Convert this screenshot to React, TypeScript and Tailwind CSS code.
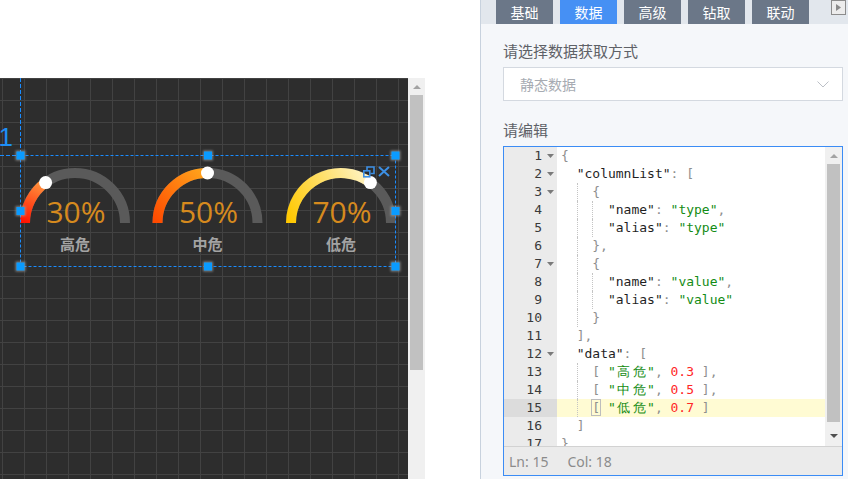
import React from 'react';

const tabs = ['基础', '数据', '高级', '钻取', '联动'];

type Kind = 'k' | 's' | 'n' | 'p';
type Line = { indent: number; fold?: boolean; toks: [Kind, string][]; box?: boolean };

const lines: Line[] = [
  { indent: 0, fold: true, toks: [['p', '{']] },
  { indent: 2, fold: true, toks: [['k', '"columnList"'], ['p', ': ['], ] },
  { indent: 4, fold: true, toks: [['p', '{']] },
  { indent: 6, toks: [['k', '"name"'], ['p', ': '], ['s', '"type"'], ['p', ',']] },
  { indent: 6, toks: [['k', '"alias"'], ['p', ': '], ['s', '"type"']] },
  { indent: 4, toks: [['p', '},']] },
  { indent: 4, fold: true, toks: [['p', '{']] },
  { indent: 6, toks: [['k', '"name"'], ['p', ': '], ['s', '"value"'], ['p', ',']] },
  { indent: 6, toks: [['k', '"alias"'], ['p', ': '], ['s', '"value"']] },
  { indent: 4, toks: [['p', '}']] },
  { indent: 2, toks: [['p', '],']] },
  { indent: 2, fold: true, toks: [['k', '"data"'], ['p', ': [']] },
  { indent: 4, toks: [['p', '[ '], ['s', '"高危"'], ['p', ', '], ['n', '0.3'], ['p', ' ],']] },
  { indent: 4, toks: [['p', '[ '], ['s', '"中危"'], ['p', ', '], ['n', '0.5'], ['p', ' ],']] },
  { indent: 4, box: true, toks: [['p', '[ '], ['s', '"低危"'], ['p', ', '], ['n', '0.7'], ['p', ' ]']] },
  { indent: 2, toks: [['p', ']']] },
  { indent: 0, toks: [['p', '}']] },
];

const kindClass: Record<Kind, string> = {
  k: 'text-[#1f1f1f]',
  s: 'text-[#148c14]',
  n: 'text-[#ff2626]',
  p: 'text-[#8e8e8e]',
};

// wide CJK glyphs take two columns in the editor
function renderText(text: string) {
  return Array.from(text).map((ch, i) =>
    /[\u4e00-\u9fff]/.test(ch) ? (
      <span key={i} className="inline-block w-[2ch] text-center">
        {ch}
      </span>
    ) : (
      ch
    )
  );
}

function CodeRow({ line, n }: { line: Line; n: number }) {
  const active = n === 15;
  const chunks = Array.from({ length: line.indent / 2 });
  return (
    <div className="flex h-[18px]">
      <div className={`flex w-[53px] shrink-0 ${active ? 'bg-[#dcdcdc]' : 'bg-[#ebebeb]'}`}>
        <span className="w-[38px] text-right text-[#3a3a3a]">{n}</span>
        <span className="flex w-[15px] items-center justify-center pl-[1px]">
          {line.fold && (
            <svg width="7" height="4" viewBox="0 0 7 4">
              <path d="M0 0H7L3.5 4Z" fill="#7a7a7a" />
            </svg>
          )}
        </span>
      </div>
      <div className={`min-w-0 flex-1 whitespace-pre pl-[4px] ${active ? 'bg-[#fffbd3]' : ''}`}>
        {chunks.map((_, i) => (
          <span
            key={i}
            className={`inline-block h-[18px] w-[2ch] align-top ${i > 0 ? 'border-l border-dotted border-[#c4c4c4]' : ''}`}
          />
        ))}
        {line.toks.map(([k, t], i) =>
          line.box && i === 0 ? (
            <span key={i} className={kindClass[k]}>
              <span className="outline outline-1 outline-[#bdbdbd]">[</span>
              {t.slice(1)}
            </span>
          ) : (
            <span key={i} className={kindClass[k]}>
              {renderText(t)}
            </span>
          )
        )}
      </div>
    </div>
  );
}

function Editor() {
  return (
    <div className="mt-[6px] flex h-[330px] flex-col border border-[#3b8cf5] bg-white">
      <div className="flex h-[299px] overflow-hidden">
        <div className="min-w-0 flex-1 overflow-hidden font-['DejaVu_Sans_Mono',monospace] text-[13px] leading-[18px]">
          {lines.map((l, i) => (
            <CodeRow key={i} line={l} n={i + 1} />
          ))}
        </div>
        <div className="flex w-[17px] shrink-0 flex-col items-center bg-[#f0f0f0]">
          <svg className="mt-[7px]" width="8" height="4" viewBox="0 0 8 4">
            <path d="M0 4L4 0L8 4Z" fill="#a3a3a3" />
          </svg>
          <div className="mt-[6px] h-[258px] w-[13px] bg-[#c1c1c1]" />
          <svg className="mt-[12px]" width="8" height="4" viewBox="0 0 8 4">
            <path d="M0 0H8L4 4Z" fill="#505050" />
          </svg>
        </div>
      </div>
      <div className="flex h-[29px] items-center border-t border-[#d2d2d2] bg-[#ebebeb] pl-[5px] font-['Noto_Sans',sans-serif] text-[14px] text-[#8b8b8b]">
        <span>Ln: 15</span>
        <span className="ml-[19px]">Col: 18</span>
      </div>
    </div>
  );
}

function SettingsPanel() {
  return (
    <div className="flex min-w-0 flex-1 flex-col bg-[#f5f7fa]">
      <div className="flex h-[24px] shrink-0 gap-[7px] bg-[#e2e7ed] pl-[15px]">
        {tabs.map((t) => (
          <div
            key={t}
            className={`flex w-[57px] items-center justify-center text-[14px] text-white ${
              t === '数据' ? 'bg-[#4690f4]' : 'bg-[#6b7788]'
            }`}
          >
            {t}
          </div>
        ))}
        <div className="ml-auto mr-[2px] flex h-[15px] w-[15px] items-center justify-center border border-[#8c8c8c] bg-[#ececec]">
          <svg width="5" height="7" viewBox="0 0 5 7">
            <path d="M0 0L5 3.5L0 7Z" fill="#8a8a8a" />
          </svg>
        </div>
      </div>
      <div className="flex flex-col pl-[22px] pr-[5px]">
        <div className="mt-[17px] text-[15px] leading-[20px] text-[#5e6167]">请选择数据获取方式</div>
        <div className="mt-[6px] flex h-[34px] items-center justify-between border border-[#d4d9e0] bg-white pl-[16px] pr-[13px]">
          <span className="text-[14px] text-[#a7abb2]">静态数据</span>
          <svg width="12" height="7" viewBox="0 0 12 7">
            <path d="M0.5 0.5L6 6L11.5 0.5" fill="none" stroke="#bcc0c7" strokeWidth="1" />
          </svg>
        </div>
        <div className="mt-[19px] text-[15px] leading-[20px] text-[#5e6167]">请编辑</div>
        <Editor />
      </div>
    </div>
  );
}

const gauges = [
  { cx: 75, p: 0.3, label: '高危', id: 'g1', from: '#ff1200', to: '#ff9a40' },
  { cx: 207.5, p: 0.5, label: '中危', id: 'g2', from: '#ff4a00', to: '#ffa51c' },
  { cx: 341, p: 0.7, label: '低危', id: 'g3', from: '#ffc800', to: '#fff3c2' },
];

const handles: [number, number][] = [
  [20.5, 77.5], [208, 77.5], [395.5, 77.5],
  [20.5, 133], [395.5, 133],
  [20.5, 188.5], [208, 188.5], [395.5, 188.5],
];

function GaugeWidget() {
  const cy = 145;
  const r = 50;
  return (
    <svg className="absolute left-0 top-0" width="408" height="401" viewBox="0 0 408 401">
      <defs>
        {gauges.map((g) => {
          const a = Math.PI * g.p;
          return (
            <linearGradient
              key={g.id}
              id={g.id}
              gradientUnits="userSpaceOnUse"
              x1={g.cx - r}
              y1={cy}
              x2={g.cx - r * Math.cos(a)}
              y2={cy - r * Math.sin(a)}
            >
              <stop offset="0" stopColor={g.from} />
              <stop offset="1" stopColor={g.to} />
            </linearGradient>
          );
        })}
        <filter id="glow" x="-1" y="-1" width="3" height="3">
          <feGaussianBlur stdDeviation="1.3" />
        </filter>
      </defs>

      {/* guide lines */}
      <line x1="20.5" y1="0" x2="20.5" y2="77" stroke="#1a8cff" strokeDasharray="4 2" />
      <line x1="0" y1="77.5" x2="20" y2="77.5" stroke="#1a8cff" strokeDasharray="4 2" />
      <text
        x="13"
        y="68"
        textAnchor="end"
        fontSize="26"
        fill="#1e8ff5"
        fontFamily="Liberation Sans, sans-serif"
      >
        71
      </text>

      {gauges.map((g) => {
        const a = Math.PI * g.p;
        const ex = g.cx - r * Math.cos(a);
        const ey = cy - r * Math.sin(a);
        return (
          <g key={g.id}>
            <path
              d={`M ${g.cx - r} ${cy} A ${r} ${r} 0 0 1 ${g.cx + r} ${cy}`}
              fill="none"
              stroke="#5a5a5a"
              strokeWidth="10"
            />
            <path
              d={`M ${g.cx - r} ${cy} A ${r} ${r} 0 0 1 ${ex} ${ey}`}
              fill="none"
              stroke={`url(#${g.id})`}
              strokeWidth="10"
            />
            <circle cx={ex} cy={ey} r="6.5" fill="#ffffff" />
            <text
              x={g.cx + 1}
              y={cy}
              textAnchor="middle"
              fontSize="30"
              fill="#d68a1e"
              fontFamily="Open Sans, sans-serif"
            >
              {Math.round(g.p * 100)}%
            </text>
            <text
              x={g.cx}
              y={172}
              textAnchor="middle"
              fontSize="15"
              fontWeight="bold"
              fill="#a3a3a3"
              fontFamily="Noto Sans CJK SC, sans-serif"
            >
              {g.label}
            </text>
          </g>
        );
      })}

      {/* selection box */}
      <rect x="20.5" y="77.5" width="375" height="111" fill="none" stroke="#1a8cff" strokeDasharray="3 2" />

      {/* copy / close icons */}
      <g stroke="#3c8fe4" strokeWidth="1.6" fill="none">
        <rect x="363.8" y="170.8" width="6" height="6" transform="translate(0 -78)" />
        <path d="M367 92V89H374V95.5H370.5" />
        <path d="M379 89L389 98M389 89L379 98" strokeWidth="2" />
      </g>

      {handles.map(([x, y], i) => (
        <g key={i}>
          <rect x={x - 5} y={y - 5} width="10" height="10" fill="#a0a0a0" opacity="0.7" filter="url(#glow)" />
          <rect x={x - 4} y={y - 4} width="8" height="8" fill="#0a9bff" />
        </g>
      ))}
    </svg>
  );
}

function DesignCanvas() {
  return (
    <div className="relative h-full w-[408px] shrink-0 overflow-hidden bg-[#2d2d2d] bg-[linear-gradient(90deg,#424242_1px,transparent_1px),linear-gradient(180deg,#424242_1px,transparent_1px)] bg-[length:22px_22px] bg-[position:2px_0px]">
      <GaugeWidget />
    </div>
  );
}

export default function App() {
  return (
    <div className="flex h-[479px] w-[848px] overflow-hidden bg-white font-['Noto_Sans_CJK_SC',sans-serif]">
      <div className="flex w-[480px] shrink-0 flex-col">
        <div className="h-[78px] shrink-0" />
        <div className="flex min-h-0 flex-1">
          <DesignCanvas />
          <div className="flex w-[17px] shrink-0 flex-col items-center bg-[#f0f0f0]">
            <svg className="mt-[7px]" width="8" height="4" viewBox="0 0 8 4">
              <path d="M0 4L4 0L8 4Z" fill="#a3a3a3" />
            </svg>
            <div className="mt-[6px] h-[275px] w-[13px] bg-[#c1c1c1]" />
          </div>
        </div>
      </div>
      <div className="w-px shrink-0 bg-[#c8d2de]" />
      <SettingsPanel />
    </div>
  );
}
